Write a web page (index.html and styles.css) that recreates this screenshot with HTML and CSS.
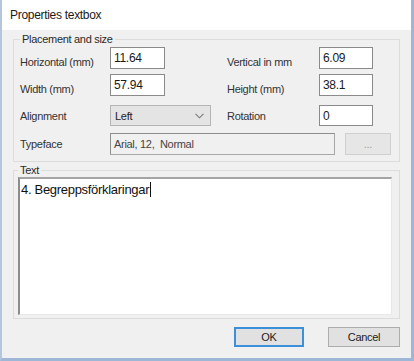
FILE: index.html
```html
<!DOCTYPE html>
<html lang="en">
<head>
    <meta charset="UTF-8">
    <meta name="viewport" content="width=device-width, initial-scale=1.0">
    <title>Properties textbox</title>
    <link rel="stylesheet" href="styles.css">
</head>
<body>
    <div class="window">
        <div class="titlebar">Properties textbox</div>

        <div class="content">
            <fieldset class="group">
                <legend>Placement and size</legend>

                <div class="row row-low">
                    <span class="lbl">Horizontal (mm)</span>
                    <span class="inp">11.64</span>
                    <span class="lbl lbl-right">Vertical in mm</span>
                    <span class="inp inp-right">6.09</span>
                </div>

                <div class="row row-low row-2">
                    <span class="lbl">Width (mm)</span>
                    <span class="inp">57.94</span>
                    <span class="lbl lbl-right">Height (mm)</span>
                    <span class="inp inp-right">38.1</span>
                </div>

                <div class="row row-3">
                    <span class="lbl">Alignment</span>
                    <span class="select">
                        Left
                        <svg class="chevron" width="9" height="6" viewBox="0 0 9 6">
                            <path d="M0.5 0.8 L4.5 4.8 L8.5 0.8" fill="none" stroke="#7a7a7a" stroke-width="1.1"/>
                        </svg>
                    </span>
                    <span class="lbl lbl-rot">Rotation</span>
                    <span class="inp inp-right">0</span>
                </div>

                <div class="row row-4">
                    <span class="lbl">Typeface</span>
                    <span class="font-box">Arial, 12,&nbsp; Normal</span>
                    <span class="btn-dots">...</span>
                </div>
            </fieldset>

            <fieldset class="group group-text">
                <legend>Text</legend>
                <div class="textarea">4. Begreppsförklaringar<span class="caret"></span></div>
            </fieldset>

            <div class="buttons">
                <span class="btn btn-default">OK</span>
                <span class="btn">Cancel</span>
            </div>
        </div>
    </div>
</body>
</html>
```

FILE: styles.css
```css
body {
    margin: 0;
    font-family: "Liberation Sans", Arial, sans-serif;
    font-size: 11px;
    letter-spacing: -0.3px;
    color: #2a2a2a;
}

.window {
    width: 414px;
    height: 361px;
    box-sizing: border-box;
    border-left: 2px solid #b3c6de;
    border-right: 3px solid #9fb7d6;
    border-bottom: 3px solid #9fb7d6;
    background-color: #f0f0f0;
}

.titlebar {
    height: 30px;
    line-height: 31px;
    padding-left: 8px;
    background-color: #fff;
    font-size: 12px;
    color: #1a1a1a;
}

.content {
    padding: 0 11px;
}

.group {
    margin: 2px 0 0;
    padding: 1px 5px 6px 6px;
    border: 1px solid #dcdcdc;
}

.group legend {
    padding: 0 2px;
    line-height: 14px;
    color: #2a2a2a;
}

.row {
    display: flex;
    align-items: center;
    height: 22px;
}

.row-low {
    align-items: flex-end;
}

.row-2 {
    margin-top: 5px;
}

.row-3 {
    height: 21px;
    margin-top: 9px;
}

.row-4 {
    margin-top: 7px;
}

.lbl {
    width: 90px;
    line-height: 14px;
    color: #333;
}

.lbl-right {
    width: 92px;
    margin-left: 62px;
}

.lbl-rot {
    width: 92px;
    margin-left: 16px;
}

.inp {
    align-self: stretch;
    box-sizing: border-box;
    width: 55px;
    padding: 3px 0 0 3px;
    border: 1px solid #8a8a8a;
    background-color: #fff;
    font-size: 12px;
    color: #1a1a1a;
}

.inp-right {
    width: 54px;
}

.select {
    display: flex;
    align-items: center;
    justify-content: space-between;
    align-self: stretch;
    box-sizing: border-box;
    width: 101px;
    padding: 0 6px 0 4px;
    border: 1px solid #b5b5b5;
    background-color: #e4e4e4;
    color: #222;
}

.font-box {
    display: flex;
    align-items: center;
    align-self: stretch;
    box-sizing: border-box;
    width: 225px;
    padding-left: 3px;
    border: 1px solid #a8a8a8;
    border-top-color: #8e8e8e;
    border-left-color: #8e8e8e;
    background-color: #f0f0f0;
    color: #444;
}

.btn-dots {
    display: flex;
    align-items: center;
    justify-content: center;
    align-self: stretch;
    box-sizing: border-box;
    width: 46px;
    margin-left: 10px;
    border: 1px solid #cfcfcf;
    background-color: #e6e6e6;
    color: #9a9a9a;
}

.group-text {
    margin-top: 1px;
    padding: 0 6px 3px 4px;
}

.textarea {
    box-sizing: border-box;
    width: 374px;
    height: 138px;
    padding: 3px 0 0 1px;
    border-top: 2px solid #a4a4a4;
    border-left: 2px solid #8c8c8c;
    border-right: 1px solid #e8e8e8;
    border-bottom: 1px solid #e8e8e8;
    background-color: #fff;
    font-size: 13px;
    color: #111;
}

.caret {
    display: inline-block;
    width: 1px;
    height: 15px;
    margin-left: 1px;
    vertical-align: -3px;
    background-color: #111;
}

.buttons {
    display: flex;
    justify-content: flex-end;
    gap: 24px;
    margin-top: 8px;
}

.btn {
    display: flex;
    align-items: center;
    justify-content: center;
    box-sizing: border-box;
    width: 72px;
    height: 20px;
    border: 1px solid #adadad;
    background-color: #e1e1e1;
    color: #222;
}

.btn-default {
    width: 70px;
    border: 2px solid #3c8fd9;
}
```
